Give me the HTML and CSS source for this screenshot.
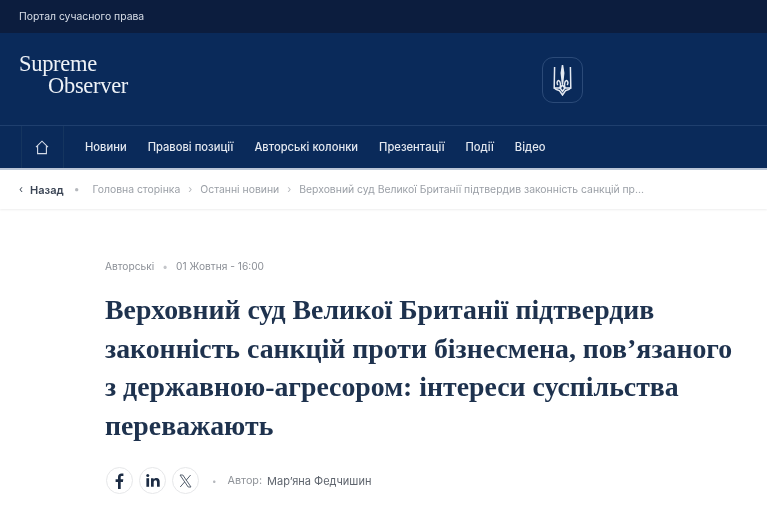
FILE: index.html
```html
<!DOCTYPE html>
<html lang="uk">
<head>
    <meta charset="UTF-8">
    <meta name="viewport" content="width=device-width, initial-scale=1.0">
    <title>Supreme Observer</title>
    <link rel="stylesheet" href="styles.css">
</head>
<body>
    <div class="topbar">Портал сучасного права</div>

    <header class="header">
        <div class="logo">
            <span>Supreme</span>
            <span class="logo-second">Observer</span>
        </div>
        <div class="trident-box">
            <svg width="19" height="32" viewBox="0 0 19 32" fill="none" stroke="#e4e9f1" stroke-width="1.5">
                <path d="M9.5 1 L8.3 9 L9.5 20 L10.7 9 Z" fill="#e4e9f1"/>
                <path d="M1.6 3 L1.2 24 H6.8 C8 21.5 7.6 17 5.6 16.5 C3.8 16.5 3.6 20 5 21"/>
                <path d="M17.4 3 L17.8 24 H12.2 C11 21.5 11.4 17 13.4 16.5 C15.2 16.5 15.4 20 14 21"/>
                <path d="M1.4 24 C3 26 5 26 6.4 26.5 L9.5 31 L12.6 26.5 C14 26 16 26 17.6 24"/>
                <path d="M7.2 24 L9.5 21 L11.8 24 L9.5 27.5 Z"/>
            </svg>
        </div>
    </header>

    <nav class="nav">
        <div class="home">
            <svg width="14" height="15" viewBox="0 0 14 15" fill="none" stroke="#d5dce8" stroke-width="1.1">
                <path d="M1 7.2 L7 1.2 L13 7.2"/>
                <path d="M2.6 6 V13.6 H11.4 V6"/>
            </svg>
        </div>
        <ul class="nav-links">
            <li>Новини</li>
            <li>Правові позиції</li>
            <li>Авторські колонки</li>
            <li>Презентації</li>
            <li>Події</li>
            <li>Відео</li>
        </ul>
    </nav>

    <div class="breadcrumbs">
        <span class="back">‹</span>
        <span class="back-label">Назад</span>
        <span class="sep first-sep">•</span>
        <span>Головна сторінка</span>
        <span class="sep">›</span>
        <span>Останні новини</span>
        <span class="sep">›</span>
        <span>Верховний суд Великої Британії підтвердив законність санкцій пр...</span>
    </div>

    <main class="article">
        <div class="meta">
            <span>Авторські</span>
            <span class="dot">•</span>
            <span>01 Жовтня - 16:00</span>
        </div>

        <h1 class="title">Верховний суд Великої Британії підтвердив законність санкцій проти бізнесмена, пов’язаного з державною-агресором: інтереси суспільства переважають</h1>

        <div class="share">
            <div class="circle">
                <svg width="9" height="16" viewBox="0 0 9 16" fill="#1c2c44">
                    <path d="M3 16 V9 H0.6 V6.2 H3 V4 C3 1.6 4.4 0.4 6.5 0.4 C7.4 0.4 8.1 0.5 8.4 0.5 V3 H7 C5.9 3 5.7 3.5 5.7 4.3 V6.2 H8.3 L7.9 9 H5.7 V16 Z"/>
                </svg>
            </div>
            <div class="circle">
                <svg width="14" height="13" viewBox="0 0 14 13" fill="#1c2c44">
                    <rect x="0.4" y="4.2" width="2.7" height="8.6"/>
                    <circle cx="1.75" cy="1.6" r="1.5"/>
                    <path d="M5 4.2 H7.6 V5.4 C8.1 4.6 9.1 4 10.4 4 C13 4 13.7 5.7 13.7 8 V12.8 H11 V8.5 C11 7.4 10.8 6.3 9.5 6.3 C8.2 6.3 7.7 7.3 7.7 8.5 V12.8 H5 Z"/>
                </svg>
            </div>
            <div class="circle">
                <svg width="13" height="14" viewBox="0 0 13 14" fill="none" stroke="#56616f" stroke-width="1">
                    <path d="M1 1 H3.8 L12 13 H9.2 Z"/>
                    <path d="M11.6 1 L7.2 6.2 M5.6 8 L1.2 13"/>
                </svg>
            </div>
            <span class="sep author-sep">•</span>
            <span class="author-label">Автор:</span>
            <span class="author">Мар’яна Федчишин</span>
        </div>
    </main>
</body>
</html>
```

FILE: styles.css
```css
html, body {
    margin: 0;
    padding: 0;
    background-color: white;
    overflow: hidden;
}

body {
    font-family: "Inter", "Liberation Sans", sans-serif;
    filter: blur(0.45px); /* the reference is a soft, scaled-up capture */
}

.topbar {
    height: 33px;
    padding-left: 19px;
    display: flex;
    align-items: center;
    background-color: #0c1d3e;
    color: #d9dfe9;
    font-size: 10.4px;
}

.header {
    height: 92px;
    padding-left: 19px;
    display: flex;
    align-items: center;
    background-color: #0a2a5a;
    border-bottom: 1px solid #1f3f6e;
    position: relative;
}

.logo {
    display: flex;
    flex-direction: column;
    margin-top: -8px;
    font-family: "Liberation Serif", serif;
    font-size: 22.5px;
    line-height: 22px;
    letter-spacing: -0.3px;
    color: #eef2f7;
}

.logo-second {
    margin-left: 29px;
}

/* sits in the middle of the header, over the logo row */
.trident-box {
    position: absolute;
    left: 542px;
    top: 24px;
    width: 41px;
    height: 46px;
    box-sizing: border-box;
    border: 1px solid #2b4a78;
    border-radius: 11px;
    display: flex;
    align-items: center;
    justify-content: center;
}

.nav {
    height: 42px;
    padding-left: 21px;
    display: flex;
    background-color: #0a2a5a;
    border-bottom: 2px solid #b9c4d6;
}

.home {
    width: 41px;
    display: flex;
    align-items: center;
    justify-content: center;
    border-left: 1px solid #15355f;
    border-right: 1px solid #15355f;
}

.home svg {
    margin-right: 2px;
}

.nav-links {
    list-style: none;
    margin: 0;
    padding: 0 0 0 21px;
    display: flex;
    align-items: center;
    gap: 21px;
    color: #e3e8f0;
    font-size: 11.2px;
    font-weight: 500;
}

.breadcrumbs {
    height: 39px;
    padding-left: 19px;
    display: flex;
    align-items: center;
    color: #9a9fa6;
    font-size: 10.4px;
    white-space: nowrap;
    box-shadow: 0 1px 2px #eeeeee;
}

.back {
    color: #46505e;
    margin-right: 7px;
}

.back-label {
    color: #3c4656;
    font-size: 11px;
    font-weight: 600;
}

.sep {
    color: #b5b8bd;
    margin: 0 8px;
}

.first-sep {
    margin: 0 13px 0 10px;
}

.article {
    padding: 51px 0 0 105px;
}

.meta {
    display: flex;
    gap: 8px;
    color: #8b8f96;
    font-size: 10.2px;
}

.dot {
    color: #c3c5c9;
}

.title {
    margin: 19px 0 0;
    width: 630px;
    font-family: "Liberation Serif", serif;
    font-size: 27.8px;
    line-height: 38.6px;
    font-weight: bold;
    color: #1e324e;
}

.share {
    margin-top: 22px;
    display: flex;
    align-items: center;
    gap: 6px;
    padding-left: 1px;
}

.circle {
    width: 27px;
    height: 27px;
    box-sizing: border-box;
    border: 1px solid #e6e7e9;
    border-radius: 50%;
    display: flex;
    align-items: center;
    justify-content: center;
}

.author-sep {
    margin: 0 5px 0 7px;
    font-size: 8px;
}

.author-label {
    color: #8f9399;
    font-size: 10.8px;
}

.author {
    color: #5f656e;
    font-size: 11px;
    margin-left: -1px;
}
```
